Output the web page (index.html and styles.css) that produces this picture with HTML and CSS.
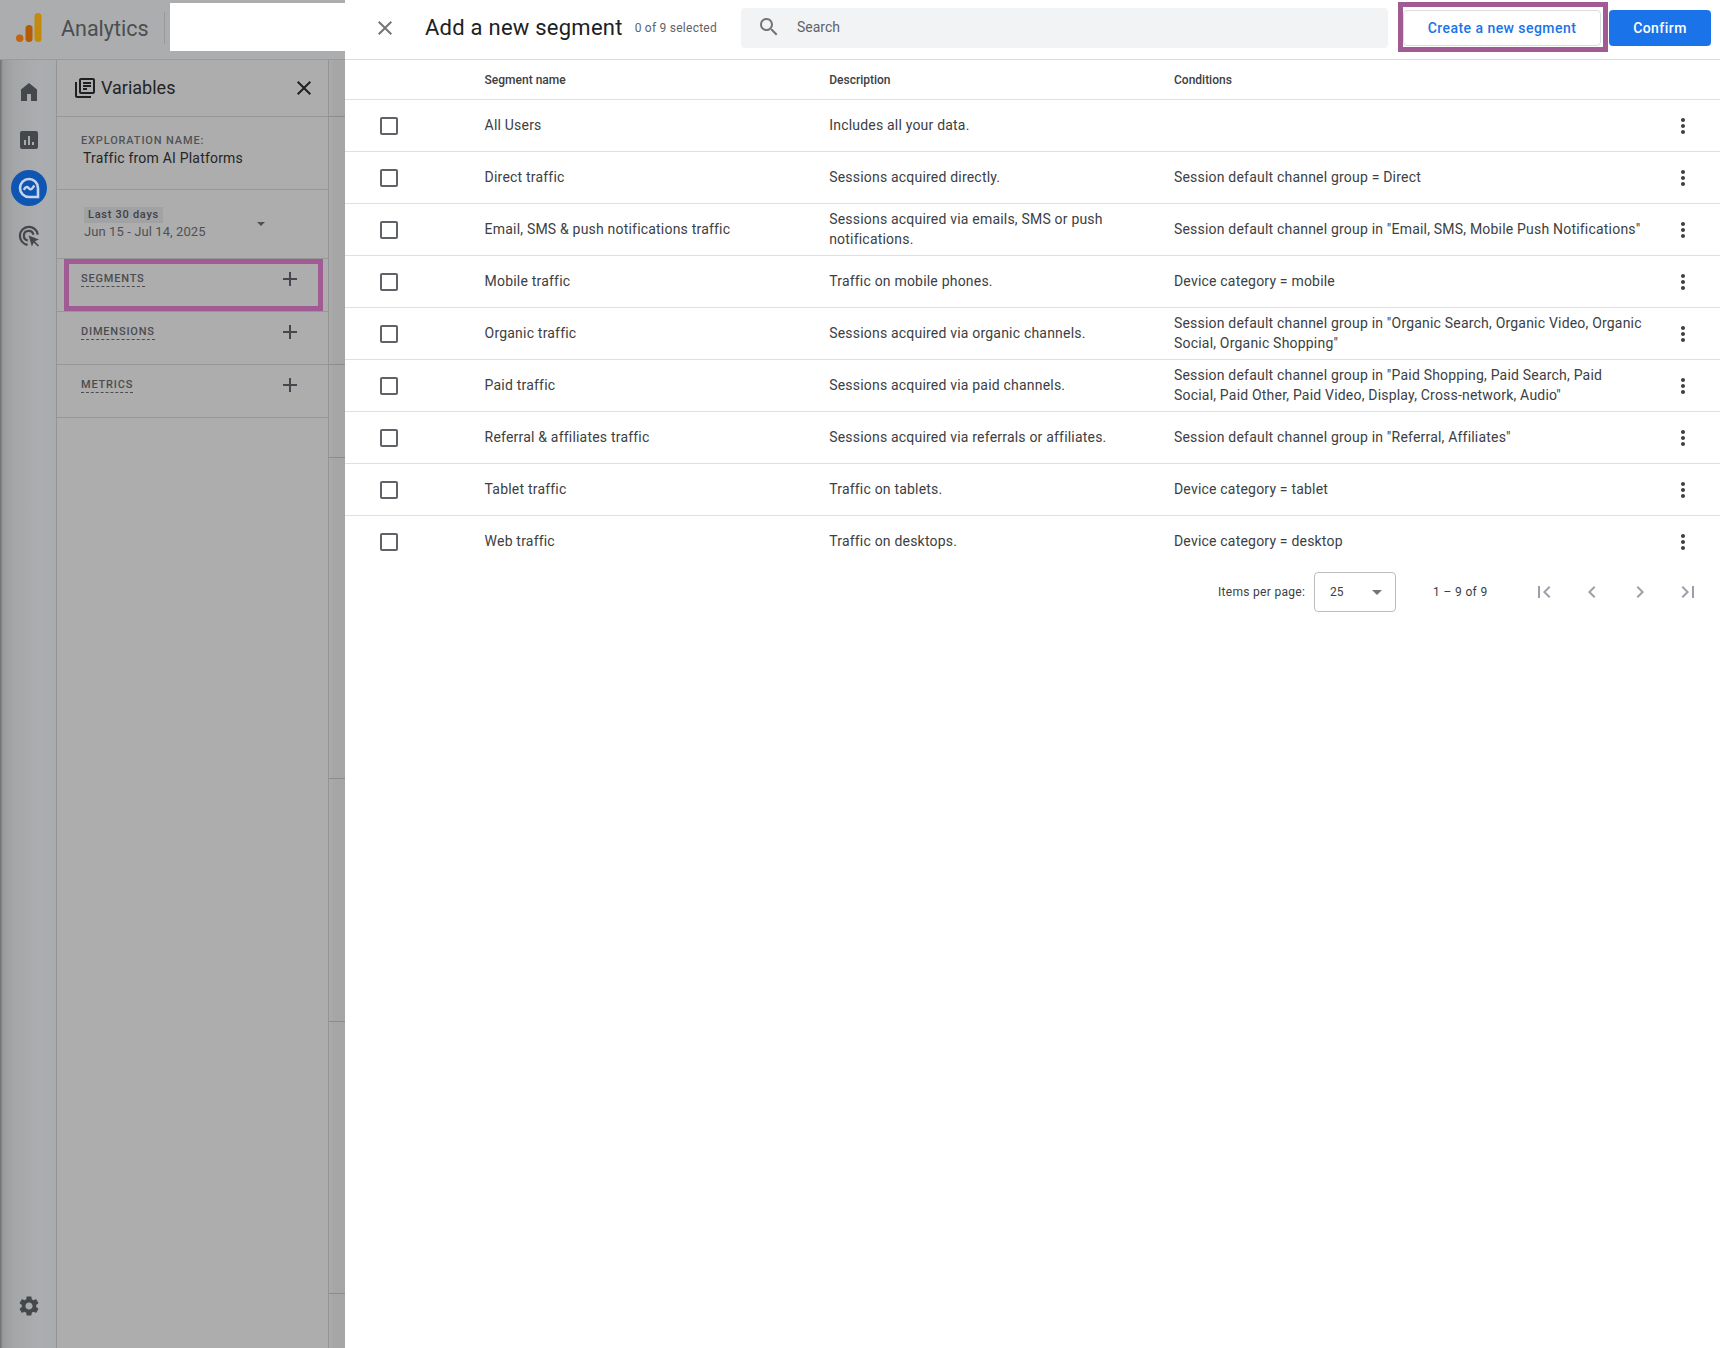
FILE: index.html
```html
<!DOCTYPE html>
<html lang="en">
<head>
<meta charset="utf-8">
<title>Add a new segment</title>
<link rel="stylesheet" href="styles.css">
</head>
<body>
<div class="app">
  <header class="topbar">
    <svg class="logo" width="28" height="32" viewBox="0 0 28 32"><circle cx="4.7" cy="26.3" r="3.7" fill="#c0660f"/><rect x="10.5" y="13" width="7" height="17" rx="3.5" fill="#b35c05"/><rect x="19.5" y="1" width="7" height="29" rx="3.5" fill="#c48a0b"/></svg>
    <span class="brand">Analytics</span>
    <span class="brand-sep"></span>
    <span class="redact"></span>
  </header>
  <div class="workspace">
    <nav class="rail">
      <a class="rail-item"><svg class="ic" viewBox="0 0 24 24"><path d="M4 21V9.500L12 3l8 6.500V21h-6v-7h-4v7z"/></svg></a>
      <a class="rail-item"><svg class="ic" viewBox="0 0 24 24"><path d="M19 3H5c-1.100 0-2 .9-2 2v14c0 1.100.9 2 2 2h14c1.100 0 2-.9 2-2V5c0-1.100-.9-2-2-2zM9 17H7v-5h2v5zm4 0h-2V8h2v9zm4 0h-2v-3h2v3z"/></svg></a>
      <a class="rail-item"><span class="rail-dot"><svg width="24" height="24" viewBox="0 0 24 24"><path class="explore-shape" d="M12 3a9 9 0 1 0 0 18h9v-9a9 9 0 0 0-9-9z"/><path class="explore-line" d="M6.800 13.800c1-1.800 2.200-3 3.400-2.800s2 2.400 3.400 2.400 2.400-2.200 3.800-3.900"/></svg></span></a>
      <a class="rail-item"><svg class="ic" viewBox="0 0 24 24"><path class="target" d="M10.600 20.800a9 9 0 1 1 10.200-10.200M10.800 16.400a4.800 4.800 0 1 1 5.600-5.600"/><path d="M11.600 11.600l10.400 3.900-4.200 1.800 4.200 4.200-1.100 1.100-4.200-4.200-1.800 4.200z"/></svg></a>
      <a class="rail-item rail-bottom"><svg class="ic" viewBox="0 0 24 24"><path d="M19.140 12.940c.04-.3.06-.61.06-.94 0-.32-.02-.64-.07-.94l2.030-1.580c.18-.14.23-.41.12-.61l-1.920-3.320c-.12-.22-.37-.29-.59-.22l-2.390.96c-.5-.38-1.030-.7-1.620-.94l-.36-2.540c-.04-.24-.24-.41-.48-.41h-3.840c-.24 0-.43.17-.47.41l-.36 2.540c-.59.24-1.130.57-1.620.94l-2.390-.96c-.22-.08-.47 0-.59.22L2.740 8.870c-.12.21-.08.47.12.61l2.030 1.580c-.05.3-.09.63-.09.94s.02.64.07.94l-2.030 1.580c-.18.14-.23.41-.12.61l1.920 3.320c.12.22.37.29.59.22l2.390-.96c.5.38 1.030.7 1.620.94l.36 2.540c.05.24.24.41.48.41h3.840c.24 0 .44-.17.47-.41l.36-2.540c.59-.24 1.130-.56 1.620-.94l2.390.96c.22.08.47 0 .59-.22l1.920-3.320c.12-.22.07-.47-.12-.61l-2.010-1.580zM12 15.600c-1.980 0-3.600-1.620-3.600-3.600s1.620-3.600 3.600-3.600 3.600 1.620 3.600 3.600-1.620 3.600-3.600 3.600z"/></svg></a>
    </nav>
    <aside class="vars">
      <div class="vars-head">
        <svg class="ic-dark" width="24" height="24" viewBox="0 0 24 24"><path d="M4 6H2v14c0 1.100.9 2 2 2h14v-2H4V6zm16-4H8c-1.100 0-2 .9-2 2v12c0 1.100.9 2 2 2h12c1.100 0 2-.9 2-2V4c0-1.100-.9-2-2-2zm0 14H8V4h12v12zM10 9h8v2h-8zm0 3h4v2h-4zm0-6h8v2h-8z"/></svg>
        <span class="vars-title">Variables</span>
        <svg class="ic-dark vars-close" width="24" height="24" viewBox="0 0 24 24"><path d="M19 6.410L17.590 5 12 10.590 6.410 5 5 6.410 10.590 12 5 17.590 6.410 19 12 13.410 17.590 19 19 17.590 13.410 12z"/></svg>
      </div>
      <div class="vars-name">
        <div class="label">EXPLORATION NAME:</div>
        <div class="name-value">Traffic from AI Platforms</div>
      </div>
      <div class="vars-date">
        <div class="date-text">
          <span class="date-chip">Last 30 days</span>
          <span class="date-range">Jun 15 - Jul 14, 2025</span>
        </div>
        <span class="date-caret"></span>
      </div>
      <div class="vars-sec">
        <span class="sec-label">SEGMENTS</span>
        <svg class="ic plus" viewBox="0 0 24 24"><path d="M19 13h-6v6h-2v-6H5v-2h6V5h2v6h6v2z"/></svg>
        <span class="mark"></span>
      </div>
      <div class="vars-sec">
        <span class="sec-label">DIMENSIONS</span>
        <svg class="ic plus" viewBox="0 0 24 24"><path d="M19 13h-6v6h-2v-6H5v-2h6V5h2v6h6v2z"/></svg>
      </div>
      <div class="vars-sec">
        <span class="sec-label">METRICS</span>
        <svg class="ic plus" viewBox="0 0 24 24"><path d="M19 13h-6v6h-2v-6H5v-2h6V5h2v6h6v2z"/></svg>
      </div>
    </aside>
    <div class="behind">
      <div class="behind-cell c1"></div>
      <div class="behind-cell c2"></div>
      <div class="behind-cell c3"></div>
      <div class="behind-cell c4"></div>
      <div class="behind-cell c5"></div>
      <div class="behind-cell c6"></div>
    </div>
  </div>

  <section class="panel">
    <div class="panel-head">
      <svg class="panel-close" width="24" height="24" viewBox="0 0 24 24"><path d="M19 6.410L17.590 5 12 10.590 6.410 5 5 6.410 10.590 12 5 17.590 6.410 19 12 13.410 17.590 19 19 17.590 13.410 12z"/></svg>
      <h1 class="panel-title">Add a new segment</h1>
      <span class="panel-count">0 of 9 selected</span>
      <div class="search">
        <svg width="24" height="24" viewBox="0 0 24 24"><path d="M15.500 14h-.79l-.28-.27C15.410 12.590 16 11.110 16 9.500 16 5.910 13.090 3 9.500 3S3 5.910 3 9.500 5.910 16 9.500 16c1.610 0 3.090-.59 4.230-1.570l.27.28v.79l5 4.990L20.490 19l-4.990-5zm-6 0C7.010 14 5 11.990 5 9.500S7.010 5 9.500 5 14 7.010 14 9.500 11.990 14 9.500 14z"/></svg>
        <span>Search</span>
      </div>
      <div class="create-mark"><button class="btn-create">Create a new segment</button></div>
      <button class="btn-confirm">Confirm</button>
    </div>

    <div class="row row-head">
      <span></span><span>Segment name</span><span>Description</span><span>Conditions</span><span></span>
    </div>
    <div class="row"><span class="check"></span><span>All Users</span><span>Includes all your data.</span><span></span><svg class="kebab" viewBox="0 0 24 24"><path d="M12 8c1.100 0 2-.9 2-2s-.9-2-2-2-2 .9-2 2 .9 2 2 2zm0 2c-1.100 0-2 .9-2 2s.9 2 2 2 2-.9 2-2-.9-2-2-2zm0 6c-1.100 0-2 .9-2 2s.9 2 2 2 2-.9 2-2-.9-2-2-2z"/></svg></div>
    <div class="row"><span class="check"></span><span>Direct traffic</span><span>Sessions acquired directly.</span><span>Session default channel group = Direct</span><svg class="kebab" viewBox="0 0 24 24"><path d="M12 8c1.100 0 2-.9 2-2s-.9-2-2-2-2 .9-2 2 .9 2 2 2zm0 2c-1.100 0-2 .9-2 2s.9 2 2 2 2-.9 2-2-.9-2-2-2zm0 6c-1.100 0-2 .9-2 2s.9 2 2 2 2-.9 2-2-.9-2-2-2z"/></svg></div>
    <div class="row"><span class="check"></span><span>Email, SMS &amp; push notifications traffic</span><span>Sessions acquired via emails, SMS or push notifications.</span><span>Session default channel group in "Email, SMS, Mobile Push Notifications"</span><svg class="kebab" viewBox="0 0 24 24"><path d="M12 8c1.100 0 2-.9 2-2s-.9-2-2-2-2 .9-2 2 .9 2 2 2zm0 2c-1.100 0-2 .9-2 2s.9 2 2 2 2-.9 2-2-.9-2-2-2zm0 6c-1.100 0-2 .9-2 2s.9 2 2 2 2-.9 2-2-.9-2-2-2z"/></svg></div>
    <div class="row"><span class="check"></span><span>Mobile traffic</span><span>Traffic on mobile phones.</span><span>Device category = mobile</span><svg class="kebab" viewBox="0 0 24 24"><path d="M12 8c1.100 0 2-.9 2-2s-.9-2-2-2-2 .9-2 2 .9 2 2 2zm0 2c-1.100 0-2 .9-2 2s.9 2 2 2 2-.9 2-2-.9-2-2-2zm0 6c-1.100 0-2 .9-2 2s.9 2 2 2 2-.9 2-2-.9-2-2-2z"/></svg></div>
    <div class="row"><span class="check"></span><span>Organic traffic</span><span>Sessions acquired via organic channels.</span><span>Session default channel group in "Organic Search, Organic Video, Organic Social, Organic Shopping"</span><svg class="kebab" viewBox="0 0 24 24"><path d="M12 8c1.100 0 2-.9 2-2s-.9-2-2-2-2 .9-2 2 .9 2 2 2zm0 2c-1.100 0-2 .9-2 2s.9 2 2 2 2-.9 2-2-.9-2-2-2zm0 6c-1.100 0-2 .9-2 2s.9 2 2 2 2-.9 2-2-.9-2-2-2z"/></svg></div>
    <div class="row"><span class="check"></span><span>Paid traffic</span><span>Sessions acquired via paid channels.</span><span>Session default channel group in "Paid Shopping, Paid Search, Paid Social, Paid Other, Paid Video, Display, Cross-network, Audio"</span><svg class="kebab" viewBox="0 0 24 24"><path d="M12 8c1.100 0 2-.9 2-2s-.9-2-2-2-2 .9-2 2 .9 2 2 2zm0 2c-1.100 0-2 .9-2 2s.9 2 2 2 2-.9 2-2-.9-2-2-2zm0 6c-1.100 0-2 .9-2 2s.9 2 2 2 2-.9 2-2-.9-2-2-2z"/></svg></div>
    <div class="row"><span class="check"></span><span>Referral &amp; affiliates traffic</span><span>Sessions acquired via referrals or affiliates.</span><span>Session default channel group in "Referral, Affiliates"</span><svg class="kebab" viewBox="0 0 24 24"><path d="M12 8c1.100 0 2-.9 2-2s-.9-2-2-2-2 .9-2 2 .9 2 2 2zm0 2c-1.100 0-2 .9-2 2s.9 2 2 2 2-.9 2-2-.9-2-2-2zm0 6c-1.100 0-2 .9-2 2s.9 2 2 2 2-.9 2-2-.9-2-2-2z"/></svg></div>
    <div class="row"><span class="check"></span><span>Tablet traffic</span><span>Traffic on tablets.</span><span>Device category = tablet</span><svg class="kebab" viewBox="0 0 24 24"><path d="M12 8c1.100 0 2-.9 2-2s-.9-2-2-2-2 .9-2 2 .9 2 2 2zm0 2c-1.100 0-2 .9-2 2s.9 2 2 2 2-.9 2-2-.9-2-2-2zm0 6c-1.100 0-2 .9-2 2s.9 2 2 2 2-.9 2-2-.9-2-2-2z"/></svg></div>
    <div class="row"><span class="check"></span><span>Web traffic</span><span>Traffic on desktops.</span><span>Device category = desktop</span><svg class="kebab" viewBox="0 0 24 24"><path d="M12 8c1.100 0 2-.9 2-2s-.9-2-2-2-2 .9-2 2 .9 2 2 2zm0 2c-1.100 0-2 .9-2 2s.9 2 2 2 2-.9 2-2-.9-2-2-2zm0 6c-1.100 0-2 .9-2 2s.9 2 2 2 2-.9 2-2-.9-2-2-2z"/></svg></div>

    <div class="pager">
      <span class="pager-label">Items per page:</span>
      <div class="pager-select"><span>25</span><i class="pager-caret"></i></div>
      <span class="pager-range">1 – 9 of 9</span>
      <div class="pager-nav">
        <svg viewBox="0 0 24 24"><path d="M18.410 16.590L13.820 12l4.590-4.590L17 6l-6 6 6 6zM6 6h2v12H6z"/></svg>
        <svg viewBox="0 0 24 24"><path d="M15.410 7.410L14 6l-6 6 6 6 1.410-1.410L10.830 12z"/></svg>
        <svg viewBox="0 0 24 24"><path d="M10 6L8.590 7.410 13.170 12l-4.580 4.590L10 18l6-6z"/></svg>
        <svg viewBox="0 0 24 24"><path d="M5.590 7.410L10.180 12l-4.590 4.590L7 18l6-6-6-6zM16 6h2v12h-2z"/></svg>
      </div>
    </div>
  </section>
</div>
</body>
</html>
```

FILE: styles.css
```css
* { box-sizing: border-box; }
html, body { margin: 0; padding: 0; }
body { font-family: Roboto, "Liberation Sans", sans-serif; background: #fff; color: #3c4043; }

.app { position: relative; width: 1720px; height: 1348px; overflow: hidden; background: #adadad; }

/* dimmed page behind the panel */
.topbar { height: 60px; display: flex; align-items: flex-start; background: #acadae; border-bottom: 1px solid #9a9a9a; }
.logo { margin: 12px 0 0 15px; flex: none; }
.brand { margin: 14px 0 0 18px; font-size: 21.500px; line-height: 30px; color: #4b4e52; }
.brand-sep { width: 1px; height: 32px; margin: 12px 0 0 15px; background: #98999a; }
.redact { width: 176px; height: 48px; margin: 3px 0 0 5px; background: #fff; flex: none; }

.workspace { display: flex; height: 1288px; }
.rail { width: 57px; flex: none; display: flex; flex-direction: column; padding: 8px 0 0 2px; border-right: 1px solid #949494; background: linear-gradient(90deg, #6f6f6f 0, #9a9b9c 3px, #a5a6a7 14px, #abadb0 40px, #a9abae 100%); }
.rail-item { width: 54px; height: 48px; display: flex; align-items: center; justify-content: center; }
.rail-bottom { margin-top: auto; margin-bottom: 18px; }
.rail-dot { width: 36px; height: 36px; border-radius: 50%; background: #0f56b3; display: flex; align-items: center; justify-content: center; }
.explore-shape { fill: none; stroke: #c6d5ea; stroke-width: 2.600; }
.explore-line { fill: none; stroke: #c6d5ea; stroke-width: 2.400; }
.ic { width: 24px; height: 24px; fill: #44474b; }
.ic-dark { fill: #1f2022; flex: none; }
.target { fill: none; stroke: #44474b; stroke-width: 2.200; }

.vars { width: 272px; flex: none; background: #adadad; border-right: 1px solid #949494; }
.vars-head { height: 57px; display: flex; align-items: center; padding: 0 12px 1px 16px; border-bottom: 1px solid #979797; }
.vars-title { margin-left: 4px; font-size: 18px; color: #232425; }
.vars-close { margin-left: auto; }
.vars-name { height: 73px; padding: 16px 0 0 24px; border-bottom: 1px solid #979797; }
.label { font-size: 11px; font-weight: 500; letter-spacing: .85px; line-height: 16px; color: #515356; }
.name-value { margin: 0 0 0 2px; font-size: 14px; letter-spacing: .2px; line-height: 18px; color: #242526; }
.vars-date { height: 69px; padding: 17px 0 0 27px; display: flex; border-bottom: 1px solid #979797; }
.date-text { display: flex; flex-direction: column; align-items: flex-start; }
.date-chip { height: 16px; padding: 0 4px; background: #a0a2a4; font-size: 11px; font-weight: 500; letter-spacing: .72px; line-height: 16px; color: #3f4144; }
.date-range { margin-top: 0; font-size: 13px; letter-spacing: .09px; line-height: 18px; color: #4f5154; }
.date-caret { width: 0; height: 0; margin: 15px 0 0 51px; border: 4px solid transparent; border-top: 4px solid #4f5154; }
.vars-sec { position: relative; height: 53px; padding: 12px 0 0 24px; border-bottom: 1px solid #979797; display: flex; align-items: flex-start; justify-content: space-between; }
.sec-label { font-size: 11px; font-weight: 500; letter-spacing: .8px; line-height: 15px; color: #4a4c50; border-bottom: 1px dashed #4a4c50; }
.plus { margin: -4px 26px 0 0; }
.mark { position: absolute; left: 7px; top: 0; width: 259px; height: 52px; border: 5px solid #a05a94; }

.behind { flex: 1; display: flex; flex-direction: column; background: linear-gradient(90deg, #ababab 0, #a6a6a6 5px, #8e8e8e 100%); }
.behind-cell { border-bottom: 1px solid #8c8c8c; flex: none; }
.c1 { height: 57px; }
.c2 { height: 248px; }
.c3 { height: 93px; }
.c4 { height: 321px; }
.c5 { height: 243px; }
.c6 { height: 272px; }

/* panel */
.panel { position: absolute; left: 345px; top: 0; width: 1375px; height: 1348px; background: #fff; }
.panel-head { height: 60px; display: flex; align-items: flex-start; border-bottom: 1px solid #dadce0; }
.panel-close { margin: 16px 0 0 28px; fill: #757575; flex: none; }
.panel-title { margin: 12px 0 0 28px; font-size: 22px; font-weight: 400; line-height: 32px; color: #202124; white-space: nowrap; letter-spacing: .24px; }
.panel-count { margin: 20px 0 0 12px; font-size: 12px; line-height: 16px; letter-spacing: .25px; color: #5f6368; white-space: nowrap; }
.search { margin: 8px 0 0 24px; width: 647px; height: 40px; flex: none; display: flex; align-items: center; padding: 0 0 2px 16px; gap: 16px; background: #f1f3f4; border-radius: 4px; font-size: 14px; color: #5f6368; }
.search svg { fill: #757575; }
.create-mark { margin: 2px 0 0 10px; width: 210px; height: 50px; flex: none; padding: 3px 2px 0 0; border: 5px solid #a05a94; }
.btn-create { width: 198px; height: 36px; display: block; padding: 0; background: #fff; border: 1px solid #dadce0; border-radius: 4px; font: 500 14px Roboto, sans-serif; letter-spacing: .45px; color: #1a73e8; }
.btn-confirm { margin: 10px 0 0 1px; width: 102px; height: 36px; padding: 0; flex: none; background: #1a73e8; border: 0; border-radius: 4px; font: 500 14px Roboto, sans-serif; letter-spacing: .45px; color: #fff; }

.row { display: grid; grid-template-columns: 139.600px 344.600px 344.800px 470px 1fr; align-items: center; height: 52px; padding-bottom: 2px; border-bottom: 1px solid #e0e0e0; font-size: 14px; letter-spacing: .2px; line-height: 20px; color: #3c4043; }
.row > span:nth-child(3) { padding-right: 40px; }
.row-head { height: 40px; padding-bottom: 0; font-size: 12px; font-weight: 500; letter-spacing: 0; color: #3c4043; }
.row:nth-last-child(2) { border-bottom: 0; }
.check { width: 18px; height: 18px; margin: 2px 0 0 35px; border: 2px solid #5f6368; border-radius: 2px; }
.kebab { width: 24px; height: 24px; margin: 2px 0 0 27px; fill: #3c4043; }

.pager { display: flex; align-items: center; height: 44px; margin-top: 2px; padding-left: 873px; font-size: 12px; color: #3c4043; }
.pager-label { width: 96px; flex: none; letter-spacing: .3px; white-space: nowrap; }
.pager-select { width: 82px; height: 40px; flex: none; display: flex; align-items: center; justify-content: space-between; padding: 0 13px 0 15px; border: 1px solid #bdbdbd; border-radius: 4px; }
.pager-caret { width: 0; height: 0; border: 5px solid transparent; border-top: 5px solid #757575; border-bottom: 0; }
.pager-range { margin-left: 37px; width: 60px; flex: none; white-space: nowrap; letter-spacing: .35px; }
.pager-nav { display: flex; gap: 24px; margin-left: 38.500px; }
.pager-nav svg { width: 24px; height: 24px; fill: #9aa0a6; }
```
